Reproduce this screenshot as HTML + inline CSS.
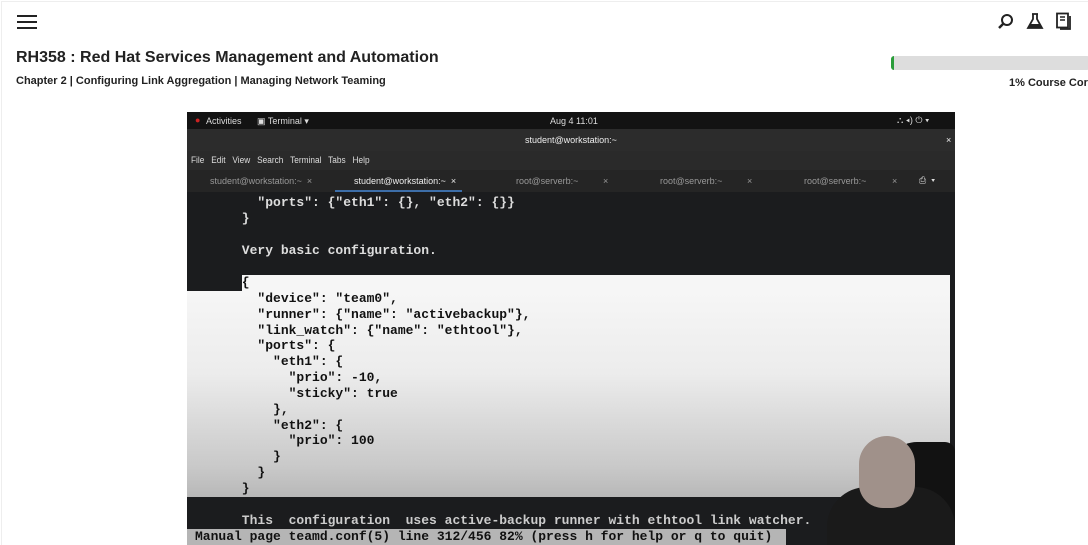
<!DOCTYPE html>
<html><head><meta charset="utf-8"><style>
*{margin:0;padding:0;box-sizing:border-box}
body{width:1088px;height:545px;overflow:hidden;background:#fff;font-family:"Liberation Sans",sans-serif;position:relative;color:#222}
.frame{position:absolute;left:1px;top:1px;right:0;bottom:0;border-left:1px solid #eee;border-top:1px solid #eee}
.ham{position:absolute;left:17px;top:15px;width:20px}
.ham i{display:block;height:2px;background:#222;margin-bottom:4px}
h1{position:absolute;left:16px;top:49px;font-size:16px;font-weight:bold;color:#222}
h2{position:absolute;left:16px;top:75px;font-size:11px;font-weight:bold;color:#222}
.bar{position:absolute;left:891px;top:56px;width:200px;height:14px;background:#ddd;border-radius:4px}
.bar b{position:absolute;left:0;top:0;width:3px;height:14px;background:#2a9d3a;border-radius:3px 0 0 3px}
.pct{position:absolute;left:1009px;top:77px;font-size:11px;font-weight:bold;white-space:nowrap}
.v{position:absolute;left:187px;top:112px;width:768px;height:433px;background:#1b1c1e;overflow:hidden;font-family:"Liberation Sans",sans-serif}
.top{position:absolute;left:0;top:0;width:768px;height:17px;background:#131313;color:#ddd;font-size:9px}
.ttl{position:absolute;left:0;top:17px;width:768px;height:22px;background:#2c2c2c;color:#eee;font-size:9px}
.menu{position:absolute;left:0;top:39px;width:768px;height:19px;background:#2a2a2a;color:#ddd;font-size:9px}
.tabs{position:absolute;left:0;top:58px;width:768px;height:22px;background:#252525;color:#999;font-size:9px}
.t{position:absolute;white-space:nowrap}
.m{font-family:"Liberation Mono",monospace;font-size:13px;font-weight:bold;position:absolute;left:8px;white-space:pre;line-height:16px}
.hl{position:absolute;background:linear-gradient(#f6f6f6,#ececec 40%,#c9c9c9 85%,#b8b8b8)}
</style></head><body>
<div class="frame"></div>
<div class="ham"><i></i><i></i><i></i></div>
<h1>RH358 : Red Hat Services Management and Automation</h1>
<h2>Chapter 2 | Configuring Link Aggregation | Managing Network Teaming</h2>
<svg style="position:absolute;left:997px;top:13px" width="18" height="18" viewBox="0 0 18 18"><circle cx="10" cy="7" r="5" fill="none" stroke="#222" stroke-width="2"/><line x1="6.5" y1="10.5" x2="2" y2="15" stroke="#222" stroke-width="2.5"/></svg>
<svg style="position:absolute;left:1026px;top:12px" width="18" height="18" viewBox="0 0 18 18"><path d="M6 2h6M7 2v5L2 16h14L11 7V2" fill="none" stroke="#222" stroke-width="1.8"/><path d="M4 12h10l2 4H2z" fill="#222"/></svg>
<svg style="position:absolute;left:1055px;top:12px" width="18" height="18" viewBox="0 0 18 18"><rect x="2" y="1.5" width="11" height="14" fill="none" stroke="#222" stroke-width="1.8"/><path d="M15 4v13H5" fill="none" stroke="#222" stroke-width="1.8"/><path d="M5 5h5M5 8h5" stroke="#222" stroke-width="1.5"/></svg>
<div class="bar"><b></b></div>
<div class="pct">1% Course Cor</div>
<div class="v">
 <div class="top"><span class="t" style="left:8px;top:3px;color:#c22">●</span><span class="t" style="left:19px;top:4px">Activities</span><span class="t" style="left:70px;top:4px">▣ Terminal ▾</span><span class="t" style="left:363px;top:4px">Aug 4 11:01</span><span class="t" style="left:710px;top:3px">⛬ ◂) ⏻ ▾</span></div>
 <div class="ttl"><span class="t" style="left:338px;top:6px">student@workstation:~</span><span class="t" style="left:759px;top:6px">×</span></div>
 <div class="menu"><span class="t" style="left:4px;top:4px;word-spacing:5px;transform:scaleX(.92);transform-origin:left">File Edit View Search Terminal Tabs Help</span></div>
 <div class="tabs"><span class="t" style="left:23px;top:6px">student@workstation:~ &nbsp;×</span><span class="t" style="left:167px;top:6px;color:#eee">student@workstation:~ &nbsp;×</span><div style="position:absolute;left:148px;top:20px;width:127px;height:2px;background:#3d6ea8"></div><span class="t" style="left:329px;top:6px">root@serverb:~</span><span class="t" style="left:416px;top:6px">×</span><span class="t" style="left:473px;top:6px">root@serverb:~</span><span class="t" style="left:560px;top:6px">×</span><span class="t" style="left:617px;top:6px">root@serverb:~</span><span class="t" style="left:705px;top:6px">×</span><span class="t" style="left:732px;top:5px;color:#ddd">⎙ &nbsp;▾</span></div>
 <div class="hl" style="left:55px;top:163px;width:708px;height:17px;background:#f6f6f6"></div>
 <div class="hl" style="left:0;top:179px;width:763px;height:206px"></div>
 <div class="m" style="top:83px;color:#ddd">        "ports": {"eth1": {}, "eth2": {}}
      }

      Very basic configuration.</div>
 <div class="m" style="top:163px;color:#111;line-height:15.85px">      {
        "device": "team0",
        "runner": {"name": "activebackup"},
        "link_watch": {"name": "ethtool"},
        "ports": {
          "eth1": {
            "prio": -10,
            "sticky": true
          },
          "eth2": {
            "prio": 100
          }
        }
      }</div>
 <div class="m" style="top:401px;color:#ccc">      This  configuration  uses active-backup runner with ethtool link watcher.</div>
 <div style="position:absolute;left:0;top:417px;width:599px;height:16px;background:#b5b5b5"></div>
 <div class="m" style="top:417px;color:#111">Manual page teamd.conf(5) line 312/456 82% (press h for help or q to quit)</div>
 <div style="position:absolute;left:700px;top:330px;width:68px;height:103px;background:#121212;border-radius:30px 10px 0 0"></div>
 <div style="position:absolute;left:640px;top:375px;width:128px;height:58px;background:#1a1a1a;border-radius:40px 40px 0 0"></div>
 <div style="position:absolute;left:672px;top:324px;width:56px;height:72px;background:#a0918a;border-radius:28px 28px 24px 24px"></div>
</div>
</body></html>
